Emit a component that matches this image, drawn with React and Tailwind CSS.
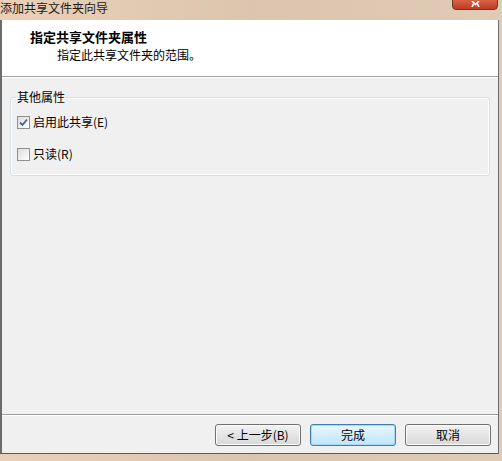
const font = { fontFamily: '"Noto Sans CJK SC", "Microsoft YaHei", sans-serif' };

const CheckBox = ({ checked }) => (
  <span className="w-[13px] h-[13px] border border-[#8e8f8f] bg-gradient-to-br from-[#dcdcdc] to-[#ffffff] flex items-center justify-center shrink-0">
    {checked && (
      <svg width="9" height="9" viewBox="0 0 9 9">
        <path d="M1 4.5 L3.5 7 L8 1.5" fill="none" stroke="#4a5f97" strokeWidth="1.8" />
      </svg>
    )}
  </span>
);

const Button = ({ children, primary }) => (
  <button
    className={
      primary
        ? 'w-[86px] h-[22px] rounded-[3px] border border-[#3c7fb1] bg-gradient-to-b from-[#eaf6fd] to-[#bee6fd] text-[12px] text-black shadow-[inset_0_0_0_1px_#a8d8f6]'
        : 'w-[86px] h-[22px] rounded-[3px] border border-[#707070] bg-gradient-to-b from-[#f2f2f2] to-[#d8d8d8] text-[12px] text-black shadow-[inset_0_0_0_1px_#fcfcfc]'
    }
  >
    {children}
  </button>
);

export default function App() {
  return (
    <div
      className="w-[502px] h-[461px] overflow-hidden flex flex-col bg-gradient-to-r from-[#ead0b6] via-[#dcc5ae] to-[#e0cbb6]"
      style={font}
    >
      <div className="h-[20px] relative shrink-0">
        <div className="text-[12px] leading-[15px] text-[#1a1a1a]">添加共享文件夹向导</div>
        <div className="absolute right-[4px] -top-[10px] w-[46px] h-[20px] rounded-b-[4px] border border-[#6b3a2a] bg-gradient-to-b from-[#e8876b] to-[#c23a1f] flex items-end justify-center pb-[2px]">
          <svg width="9" height="6" viewBox="0 0 9 6">
            <path d="M1 0 L4.5 3.5 L8 0 M3 2 L1 6 M6 2 L8 6" fill="none" stroke="#ffffff" strokeWidth="1.6" />
          </svg>
        </div>
      </div>
      <div className="flex-1 flex flex-col mr-[3px] border-l-2 border-r border-b border-l-[#6c6c6c] border-r-[#6c6c6c] border-b-[#5a5a5a] mb-[7px] bg-[#f0f0f0]">
        <div className="h-[57px] bg-white border-b border-[#a0a0a0] shrink-0 pt-[9px]">
          <div className="pl-[28px] text-[13px] font-bold leading-[16px] text-black">指定共享文件夹属性</div>
          <div className="pl-[55px] text-[12px] leading-[16px] text-black mt-[2px]">指定此共享文件夹的范围。</div>
        </div>
        <div className="flex-1 flex flex-col border-t border-white">
          <fieldset className="mt-[12px] ml-[8px] mr-[8px] border border-[#d5dfe5] rounded-[3px] h-[86px] pl-[6px] shadow-[inset_0_0_0_1px_#ffffff]">
            <legend className="text-[12px] leading-[14px] text-black px-[1px] -ml-[1px]">其他属性</legend>
            <label className="flex items-center gap-[3px] mt-[10px] text-[12px] leading-[16px] text-black">
              <CheckBox checked />
              <span>启用此共享(E)</span>
            </label>
            <label className="flex items-center gap-[3px] mt-[16px] text-[12px] leading-[16px] text-black">
              <CheckBox />
              <span>只读(R)</span>
            </label>
          </fieldset>
          <div className="flex-1" />
          <div className="h-[39px] border-t border-[#a0a0a0] shrink-0 shadow-[inset_0_1px_0_#ffffff] flex items-start justify-end gap-[9px] pt-[9px] pr-[7px]">
            <Button>&lt; 上一步(B)</Button>
            <Button primary>完成</Button>
            <Button>取消</Button>
          </div>
        </div>
      </div>
    </div>
  );
}
